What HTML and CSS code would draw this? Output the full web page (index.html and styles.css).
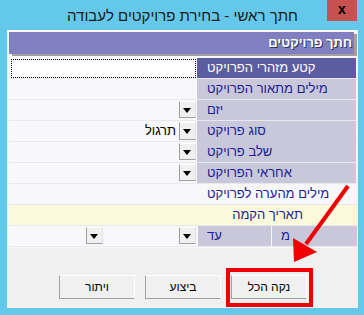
FILE: index.html
```html
<!DOCTYPE html>
<html lang="he" dir="rtl">
<head>
    <meta charset="UTF-8">
    <title>חתך ראשי - בחירת פרויקטים לעבודה</title>
    <link rel="stylesheet" href="styles.css">
</head>
<body>
    <div class="window">
        <div class="titlebar">
            <span class="title">חתך ראשי - בחירת פרויקטים לעבודה</span>
            <span class="close">x</span>
        </div>

        <div class="client">
            <div class="panel">
                <div class="panel-head">חתך פרויקטים</div>

                <div class="row">
                    <div class="label selected">קטע מזהרי הפרויקט</div>
                    <div class="field"><div class="edit focus"></div></div>
                </div>
                <div class="row">
                    <div class="label">מילים מתאור הפרויקט</div>
                    <div class="field"></div>
                </div>
                <div class="row">
                    <div class="label">יזם</div>
                    <div class="field combo"><span class="arrow"></span><span class="value"></span></div>
                </div>
                <div class="row">
                    <div class="label">סוג פרויקט</div>
                    <div class="field combo"><span class="arrow"></span><span class="value">תרגול</span></div>
                </div>
                <div class="row">
                    <div class="label">שלב פרויקט</div>
                    <div class="field combo"><span class="arrow"></span><span class="value"></span></div>
                </div>
                <div class="row">
                    <div class="label">אחראי הפרויקט</div>
                    <div class="field combo"><span class="arrow"></span><span class="value"></span></div>
                </div>
                <div class="row">
                    <div class="label plain">מילים מהערה לפרויקט</div>
                    <div class="field"></div>
                </div>
                <div class="row section">
                    <div class="section-title">תאריך הקמה</div>
                </div>
                <div class="row dates">
                    <div class="label">מ</div>
                    <div class="label">עד</div>
                    <div class="field combo"><span class="arrow"></span><span class="value"></span></div>
                    <div class="field combo"><span class="arrow"></span><span class="value"></span></div>
                </div>
            </div>

            <div class="buttons">
                <button class="btn">נקה הכל</button>
                <button class="btn">ביצוע</button>
                <button class="btn">ויתור</button>
            </div>
        </div>

        <div class="highlight"></div>
        <svg class="pointer" width="364" height="315" viewBox="0 0 364 315">
            <line x1="348" y1="186" x2="306" y2="244" stroke="#f00000" stroke-width="4"/>
            <polygon points="294,262 293,238 317,252" fill="#f00000"/>
        </svg>
    </div>
</body>
</html>
```

FILE: styles.css
```css
* {
    box-sizing: border-box;
}
body {
    margin: 0;
    background: #64c8ea;
    font-family: "Liberation Sans", Arial, sans-serif;
}
.window {
    position: relative;
    width: 364px;
    height: 315px;
    padding: 0 6px 7px 7px;
    display: flex;
    flex-direction: column;
}
.titlebar {
    height: 30px;
    display: flex;
    justify-content: center;
    align-items: center;
    position: relative;
}
.title {
    font-size: 15px;
    color: #1a1a1a;
    margin-top: 1px;
}
.close {
    position: absolute;
    left: 320px;
    top: 0;
    width: 30px;
    height: 21px;
    background: #c75050;
    color: #000;
    font-weight: bold;
    font-size: 14px;
    text-align: center;
    line-height: 19px;
}
.client {
    flex: 1;
    background: #f0f0f0;
    display: flex;
    flex-direction: column;
}
.panel {
    background: #f8f8fa;
    margin: 0 1px 0 1px;
    padding-top: 1px;
    height: 218px;
    border-top: 1px solid #fff;
}
.panel-head {
    height: 22px;
    margin: 0 3px 4px 1px;
    background: #8080c0;
    color: #fff;
    font-weight: bold;
    font-size: 13px;
    line-height: 22px;
    padding-right: 2px;
    text-shadow: 1px 1px 0 #303050;
    box-shadow: 3px 2px 0 #a0a0a0;
}
.row {
    display: grid;
    grid-template-columns: 160px 1fr;
    height: 21px;
    border-bottom: 1px solid #e8e8ee;
    margin-left: 1px;
}
.label {
    background: #c8c8da;
    color: #1c1c96;
    font-size: 13px;
    line-height: 20px;
    padding-left: 10px;
    text-align: left;
    margin-right: 1px;
    white-space: nowrap;
}
.label.selected {
    background: #5c5ca0;
    color: #fff;
}
.label.plain {
    background: #f8f8fa;
}
.field {
    display: flex;
    align-items: stretch;
    padding-left: 1px;
}
.edit {
    flex: 1;
    background: #fff;
    margin: 1px 1px 0 1px;
}
.edit.focus {
    border: 1px dotted #000;
}
.combo {
    padding: 1px 0 2px 0;
}
.value {
    flex: 1;
    font-size: 13px;
    line-height: 18px;
    color: #000;
    padding-right: 3px;
}
.arrow {
    width: 17px;
    background: #f0f0f0;
    border: 1px solid #fff;
    border-right-color: #e0e0e0;
    border-bottom-color: #a0a0a0;
    border-left-color: #a0a0a0;
    position: relative;
    margin-right: 1px;
}
.arrow::after {
    content: "";
    position: absolute;
    left: 3px;
    top: 6px;
    border-top: 5px solid #000;
    border-left: 4px solid transparent;
    border-right: 4px solid transparent;
}
.section {
    display: block;
    background: #fbf9dc;
}
.section-title {
    color: #1c1c96;
    font-size: 13px;
    line-height: 20px;
    padding-right: 54px;
}
.dates {
    grid-template-columns: 86px 74px 93px 1fr;
}
.dates .label {
    margin-right: 0;
    margin-left: 1px;
    padding-left: 9px;
}
.dates .field {
    padding-left: 1px;
}
.buttons {
    display: flex;
    gap: 10px;
    padding: 27px 51px 0 0;
}
.btn {
    width: 76px;
    height: 24px;
    background: #f0f0f0;
    border: 1px solid #fff;
    border-bottom-color: #a0a0a0;
    border-left-color: #a0a0a0;
    font-family: "Liberation Sans", Arial, sans-serif;
    font-size: 12px;
    color: #000;
    padding: 0;
}
.highlight {
    position: absolute;
    left: 226px;
    top: 268px;
    width: 87px;
    height: 39px;
    border: 4px solid #f00000;
}
.pointer {
    position: absolute;
    left: 0;
    top: 0;
}
```
